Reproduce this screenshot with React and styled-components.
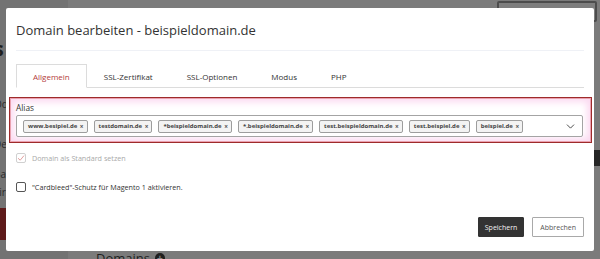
import React from "react";
import styled, { createGlobalStyle } from "styled-components";
import { ChevronDown } from "lucide-react";

const Global = createGlobalStyle`
  html, body { margin: 0; padding: 0; }
  body { width: 600px; height: 259px; overflow: hidden; background: #7a7a7a; font-family: "Open Sans", "Liberation Sans", sans-serif; }
  * { box-sizing: border-box; }
`;

const Stage = styled.div`
  position: relative;
  width: 600px;
  height: 259px;
  overflow: hidden;
`;

/* --- dimmed page behind the modal --- */
const BackPage = styled.div`
  display: flex;
  width: 600px;
  height: 259px;
`;

const Rail = styled.div`
  width: 68px;
  display: flex;
  flex-direction: column;
  background: #737373;
`;

const RailHeading = styled.div`
  margin-top: 38px;
  height: 22px;
  font-size: 19px;
  font-weight: 700;
  color: #1e1e1e;
  line-height: 22px;
  text-indent: -12px;
`;

const RailText = styled.div`
  margin-top: ${(p) => p.$mt}px;
  font-size: 10px;
  line-height: 12px;
  color: #2a2a2a;
  text-indent: -6px;
`;

const RailButton = styled.div`
  margin-top: ${(p) => p.$mt}px;
  height: 32px;
  width: 60px;
  background: #5e1a1a;
`;

const Main = styled.div`
  flex: 1;
  display: flex;
  flex-direction: column;
  background: #7b7b7b;
`;

const TopRow = styled.div`
  display: flex;
  justify-content: flex-end;
  padding-right: 3px;
`;

const TopBox = styled.div`
  width: 100px;
  height: 21px;
  margin-top: 1px;
  border: 2px solid #4c4c4c;
  border-radius: 2px;
  background: #7e7e7e;
`;

const SideBand = styled.div`
  margin-top: 128px;
  align-self: flex-end;
  width: 10px;
  height: 16px;
  background: #262626;
`;

const BottomTitle = styled.div`
  margin-top: auto;
  margin-left: 28px;
  margin-bottom: -6px;
  display: flex;
  align-items: center;
  gap: 5px;
  font-size: 13px;
  line-height: 14px;
  color: #1f1f1f;
`;

const PlusDot = styled.span`
  width: 10px;
  height: 10px;
  border-radius: 50%;
  background: #1f1f1f;
  color: #888;
  font-size: 10px;
  line-height: 10px;
  text-align: center;
  font-weight: 700;
`;

/* --- modal --- */
const Modal = styled.div`
  position: absolute;
  left: 6px;
  top: 8px;
  width: 588px;
  height: 243px;
  background: #fff;
  border-radius: 2px;
  padding: 0 10px;
  display: flex;
  flex-direction: column;
`;

const Header = styled.div`
  padding: 12px 0 10px;
  border-bottom: 1px solid #eff1f6;
`;

const Title = styled.h1`
  margin: 0;
  font-size: 13px;
  line-height: 20px;
  font-weight: 400;
  color: #333;
`;

const TabBar = styled.div`
  margin-top: 13px;
  display: flex;
  border-bottom: 1px solid #dcdcdc;
`;

const Tab = styled.div`
  height: 24px;
  padding: 0 16px;
  font-size: 8px;
  line-height: 23px;
  color: ${(p) => (p.$active ? "#b33a3a" : "#333")};
  border: 1px solid ${(p) => (p.$active ? "#dcdcdc" : "transparent")};
  border-bottom-color: ${(p) => (p.$active ? "#fff" : "transparent")};
  margin-bottom: -1px;
  background: ${(p) => (p.$active ? "#fff" : "transparent")};
`;

const AliasBox = styled.div`
  margin: 9px -8px 0 -7px;
  border: 1px solid #9e2b2b;
  box-shadow: inset 0 0 0 1px #eaa2b0, inset 0 0 7px 4px #fbdaf1;
  padding: 4px 8px 5px 6px;
`;

const Label = styled.div`
  font-size: 8.3px;
  line-height: 12px;
  color: #333;
  margin-bottom: 1px;
`;

const Select = styled.div`
  height: 22px;
  border: 1px solid #a4a4a4;
  border-radius: 2px;
  background: #fff;
  display: flex;
  align-items: center;
  padding: 0 5px 0 6px;
  gap: 6px;
`;

const Chip = styled.span`
  height: 13px;
  display: inline-flex;
  align-items: center;
  gap: 2.5px;
  padding: 0 3px 0 4px;
  border: 1px solid #9d9d9d;
  border-radius: 2px;
  background: #f3f3f3;
  font-size: 6px;
  font-weight: 700;
  color: #444;
  white-space: nowrap;
`;

const ChipX = styled.span`
  font-size: 6.5px;
  color: #555;
`;

const Chevron = styled.span`
  margin-left: auto;
  display: flex;
  align-items: center;
  color: #333;
`;

const CheckRow = styled.label`
  margin-top: ${(p) => p.$mt}px;
  display: flex;
  align-items: center;
  gap: 6px;
  font-size: 7.2px;
  line-height: 12px;
  color: ${(p) => (p.$disabled ? "#a9a9a9" : "#333")};
`;

const Box = styled.span`
  width: 10px;
  height: 10px;
  border: 1px solid ${(p) => (p.$disabled ? "#d0d0d0" : "#555")};
  border-radius: 2px;
  display: flex;
  align-items: center;
  justify-content: center;
  background: #fff;
`;

const Footer = styled.div`
  margin-top: auto;
  margin-bottom: 14px;
  display: flex;
  justify-content: flex-end;
  gap: 8px;
`;

const Button = styled.button`
  height: 20px;
  padding: 0 ${(p) => (p.$primary ? "6px" : "7px")};
  font-family: "Open Sans", "Liberation Sans", sans-serif;
  font-size: 7px;
  border-radius: 1px;
  border: 1px solid ${(p) => (p.$primary ? "#333" : "#a9a9a9")};
  background: ${(p) => (p.$primary ? "#333" : "#fff")};
  color: ${(p) => (p.$primary ? "#f2f2f2" : "#555")};
`;

const tabs = ["Allgemein", "SSL-Zertifikat", "SSL-Optionen", "Modus", "PHP"];
const aliases = [
  "www.besipiel.de",
  "testdomain.de",
  "*beispieldomain.de",
  "*.beispieldomain.de",
  "test.beispieldomain.de",
  "test.beispiel.de",
  "beispiel.de",
];

export default function App() {
  return (
    <>
      <Global />
      <Stage>
        <BackPage>
          <Rail>
            <RailHeading>Is</RailHeading>
            <RailText $mt={38}>Ode</RailText>
            <RailText $mt={28}>Der</RailText>
            <RailText $mt={18}>Bar</RailText>
            <RailText $mt={6}>Fir</RailText>
            <RailButton $mt={10} />
          </Rail>
          <Main>
            <TopRow>
              <TopBox />
            </TopRow>
            <SideBand />
            <BottomTitle>
              Domains <PlusDot>+</PlusDot>
            </BottomTitle>
          </Main>
        </BackPage>

        <Modal>
          <Header>
            <Title>Domain bearbeiten - beispieldomain.de</Title>
          </Header>
          <TabBar>
            {tabs.map((t, i) => (
              <Tab key={t} $active={i === 0}>
                {t}
              </Tab>
            ))}
          </TabBar>
          <AliasBox>
            <Label>Alias</Label>
            <Select>
              {aliases.map((a) => (
                <Chip key={a}>
                  {a} <ChipX>×</ChipX>
                </Chip>
              ))}
              <Chevron>
                <ChevronDown size={13} strokeWidth={1.6} />
              </Chevron>
            </Select>
          </AliasBox>
          <CheckRow $mt={9} $disabled>
            <Box $disabled>
              <svg width="8" height="8" viewBox="0 0 8 8">
                <path d="M1 4.2 L3.2 6.2 L7 1.6" fill="none" stroke="#e2a0a0" strokeWidth="1" />
              </svg>
            </Box>
            Domain als Standard setzen
          </CheckRow>
          <CheckRow $mt={17}>
            <Box />
            "Cardbleed"-Schutz für Magento 1 aktivieren.
          </CheckRow>
          <Footer>
            <Button $primary>Speichern</Button>
            <Button>Abbrechen</Button>
          </Footer>
        </Modal>
      </Stage>
    </>
  );
}
